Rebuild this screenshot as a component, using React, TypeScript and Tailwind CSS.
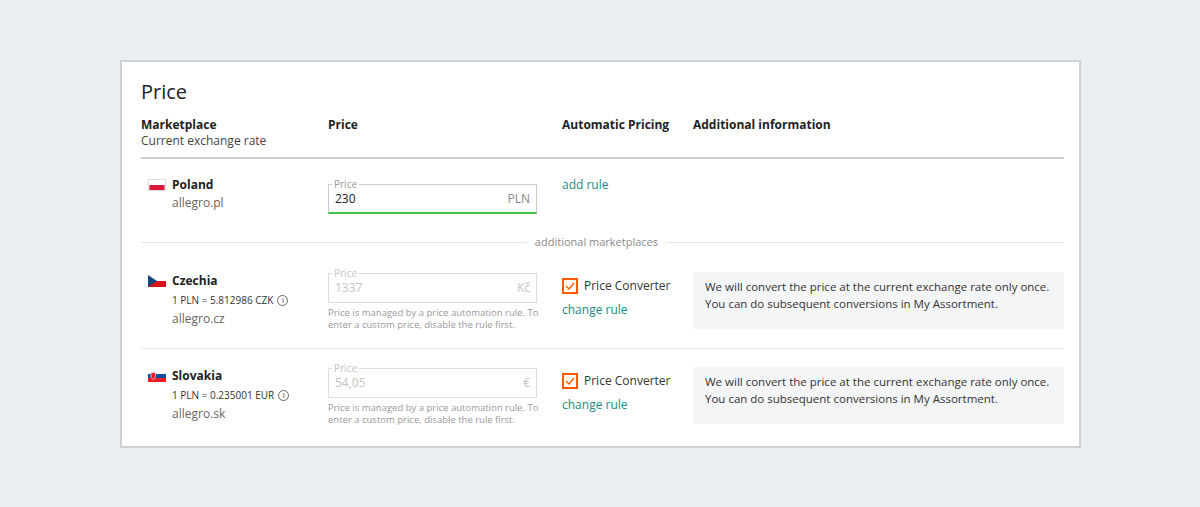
import React from "react"

function Flag({ country }: { country: "pl" | "cz" | "sk" }) {
  if (country === "pl")
    return (
      <svg width="18" height="12" viewBox="0 0 18 12" className="shrink-0 mt-[3px] border border-[#ddd]">
        <rect width="18" height="6" fill="#fff" />
        <rect y="6" width="18" height="6" fill="#dc143c" />
      </svg>
    )
  if (country === "cz")
    return (
      <svg width="18" height="12" viewBox="0 0 18 12" className="shrink-0 mt-[3px]">
        <rect width="18" height="6" fill="#fff" />
        <rect y="6" width="18" height="6" fill="#d7141a" />
        <path d="M0 0 L9 6 L0 12 Z" fill="#11457e" />
      </svg>
    )
  return (
    <svg width="18" height="12" viewBox="0 0 18 12" className="shrink-0 mt-[3px]">
      <rect width="18" height="4" fill="#fff" />
      <rect y="4" width="18" height="4" fill="#0b4ea2" />
      <rect y="8" width="18" height="4" fill="#ee1c25" />
      <path d="M3 2.5 h4.5 v4 q0 2 -2.25 3 q-2.25 -1 -2.25 -3 z" fill="#ee1c25" stroke="#fff" strokeWidth="0.6" />
    </svg>
  )
}

function Info() {
  return (
    <span className="inline-flex items-center justify-center w-[11px] h-[11px] rounded-full border border-[#666] text-[8px] leading-none ml-1">i</span>
  )
}

function Checkbox() {
  return (
    <span className="w-4 h-4 border-2 border-[#ff5a00] flex items-center justify-center shrink-0">
      <svg width="10" height="8" viewBox="0 0 10 8">
        <path d="M1 4 L4 7 L9 1" fill="none" stroke="#ff5a00" strokeWidth="1.4" />
      </svg>
    </span>
  )
}

function Divider({ label }: { label: string }) {
  return (
    <div className="flex items-center text-[11px] text-[#8a8a8a] h-[14px]">
      <div className="flex-1 h-px bg-[#e6e6e6]" />
      <span className="px-2">{label}</span>
      <div className="w-[398px] h-px bg-[#e6e6e6]" />
    </div>
  )
}

function Row({ country, name, rate, domain, value, unit }: { country: "cz" | "sk"; name: string; rate: string; domain: string; value: string; unit: string }) {
  return (
    <div className="flex h-[76px]">
      <div className="w-[187px] flex gap-[6px] pl-[7px]">
        <Flag country={country} />
        <div>
          <div className="text-[12px] font-bold text-[#222] leading-[18px]">{name}</div>
          <div className="text-[10px] text-[#333] leading-[20px] flex items-center">{rate}<Info /></div>
          <div className="text-[12px] text-[#666] leading-[18px]">{domain}</div>
        </div>
      </div>
      <div className="w-[234px] pt-[1px]">
        <div className="relative w-[209px] h-[30px] border border-[#ddd] flex items-center justify-between px-[6px] text-[12px] text-[#c4c4c4]">
          <span className="absolute -top-[8px] left-[3px] bg-white px-[2px] text-[10px] text-[#c4c4c4]">Price</span>
          <span>{value}</span>
          <span>{unit}</span>
        </div>
        <div className="text-[9.5px] leading-[12px] text-[#999] mt-[4px] w-[218px]">Price is managed by a price automation rule. To enter a custom price, disable the rule first.</div>
      </div>
      <div className="w-[131px] pt-[5px]">
        <div className="flex items-center gap-[6px] text-[12px] text-[#333]"><Checbox2 />Price Converter</div>
        <div className="text-[12px] text-[#188b84] mt-[6px]">change rule</div>
      </div>
      <div className="flex-1">
        <div className="bg-[#f4f5f6] h-[57px] px-[12px] py-[6px] text-[11.5px] leading-[17px] text-[#333]">
          We will convert the price at the current exchange rate only once. You can do subsequent conversions in My Assortment.
        </div>
      </div>
    </div>
  )
}

const Checbox2 = Checkbox

export default function App() {
  return (
    <div className="w-[1200px] h-[507px] bg-[#eceff1] pt-[60px] pl-[120px]" style={{ fontFamily: "'Open Sans', sans-serif" }}>
      <div className="w-[961px] h-[388px] bg-white border-2 border-[#cfd2d4] pl-[19px] pr-[15px] pt-[17px]">
        <h1 className="text-[20px] text-[#222] leading-[26px]">Price</h1>
        <div className="flex mt-[12px] text-[12px] leading-[16px] pb-[8px] border-b-2 border-[#d0d0d0]">
          <div className="w-[187px]">
            <div className="font-bold text-[#222]">Marketplace</div>
            <div className="text-[#444]">Current exchange rate</div>
          </div>
          <div className="w-[234px] font-bold text-[#222]">Price</div>
          <div className="w-[131px] font-bold text-[#222]">Automatic Pricing</div>
          <div className="font-bold text-[#222]">Additional information</div>
        </div>
        <div className="flex h-[76px] pt-[17px]">
          <div className="w-[187px] flex gap-[6px] pl-[7px]">
            <Flag country="pl" />
            <div>
              <div className="text-[12px] font-bold text-[#222] leading-[18px]">Poland</div>
              <div className="text-[12px] text-[#666] leading-[18px]">allegro.pl</div>
            </div>
          </div>
          <div className="w-[234px] pt-[8px]">
            <div className="relative w-[209px] h-[30px] border border-[#ccc] border-b-2 border-b-[#3ec14a] flex items-center justify-between px-[6px] text-[12px]">
              <span className="absolute -top-[8px] left-[3px] bg-white px-[2px] text-[10px] text-[#999]">Price</span>
              <span className="text-[#222]">230</span>
              <span className="text-[#888]">PLN</span>
            </div>
          </div>
          <div className="text-[12px] text-[#188b84] leading-[18px]">add rule</div>
        </div>
        <Divider label="additional marketplaces" />
        <div className="pt-[23px] border-b border-[#e6e6e6]">
          <Row country="cz" name="Czechia" rate="1 PLN = 5.812986 CZK" domain="allegro.cz" value="1337" unit="Kč" />
        </div>
        <div className="pt-[18px]">
          <Row country="sk" name="Slovakia" rate="1 PLN = 0.235001 EUR" domain="allegro.sk" value="54,05" unit="€" />
        </div>
      </div>
    </div>
  )
}
